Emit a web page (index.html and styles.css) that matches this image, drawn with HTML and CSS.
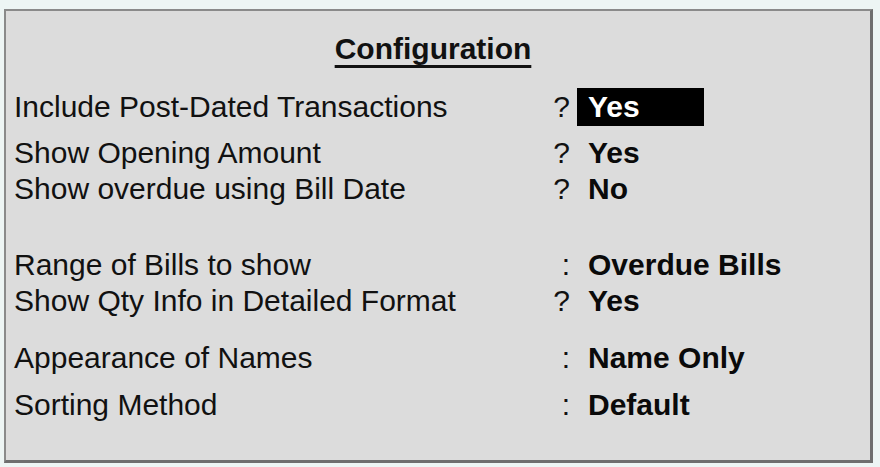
FILE: index.html
```html
<!DOCTYPE html>
<html>
<head>
<meta charset="utf-8">
<link rel="stylesheet" href="styles.css">
</head>
<body>
<div class="panel">
  <div class="title"><span class="title-text">Configuration</span></div>
  <div class="row row-first">
    <span class="label">Include Post-Dated Transactions</span>
    <span class="sign">?</span>
    <span class="value value-active">Yes</span>
  </div>
  <div class="row row-second">
    <span class="label">Show Opening Amount</span>
    <span class="sign">?</span>
    <span class="value">Yes</span>
  </div>
  <div class="row">
    <span class="label">Show overdue using Bill Date</span>
    <span class="sign">?</span>
    <span class="value">No</span>
  </div>
  <div class="row row-group">
    <span class="label">Range of Bills to show</span>
    <span class="sign">:</span>
    <span class="value">Overdue Bills</span>
  </div>
  <div class="row">
    <span class="label">Show Qty Info in Detailed Format</span>
    <span class="sign">?</span>
    <span class="value">Yes</span>
  </div>
  <div class="row row-sub">
    <span class="label">Appearance of Names</span>
    <span class="sign">:</span>
    <span class="value">Name Only</span>
  </div>
  <div class="row row-last">
    <span class="label">Sorting Method</span>
    <span class="sign">:</span>
    <span class="value">Default</span>
  </div>
</div>
</body>
</html>
```
FILE: styles.css
```css
html, body {
  margin: 0;
  padding: 0;
  background: #edf5f4;
}
body {
  width: 880px;
  height: 467px;
  overflow: hidden;
  font-family: "Liberation Sans", Arial, sans-serif;
  font-size: 30px;
  color: #111;
}
.panel {
  box-sizing: border-box;
  margin: 9px 0 0 4px;
  width: 869px;
  height: 454px;
  background: #dcdcdc;
  border-top: 2px solid #8a8a8a;
  border-left: 2px solid #8a8a8a;
  border-right: 3px solid #6e6e6e;
  border-bottom: 3px solid #6e6e6e;
  padding: 20px 0 0 8px;
}
.title {
  line-height: 36px;
  text-align: center;
  padding-right: 18px;
  font-weight: bold;
}
.title-text {
  text-decoration: underline;
  text-decoration-thickness: 3px;
  text-underline-offset: 6px;
}
.row {
  display: grid;
  grid-template-columns: 530px 26px 1fr;
  line-height: 36px;
  height: 36px;
}
.row-first {
  margin-top: 21px;
  line-height: 38px;
  height: 38px;
}
.row-second {
  margin-top: 9px;
}
.row-group {
  margin-top: 40px;
}
.row-sub {
  margin-top: 21px;
}
.row-last {
  margin-top: 11px;
}
.label {
  white-space: nowrap;
}
.sign {
  text-align: right;
}
.value {
  font-weight: bold;
  padding-left: 18px;
  color: #0a0a0a;
}
.value-active {
  justify-self: start;
  box-sizing: border-box;
  width: 127px;
  margin-left: 7px;
  padding-left: 11px;
  background: #000;
  color: #fff;
}
```
